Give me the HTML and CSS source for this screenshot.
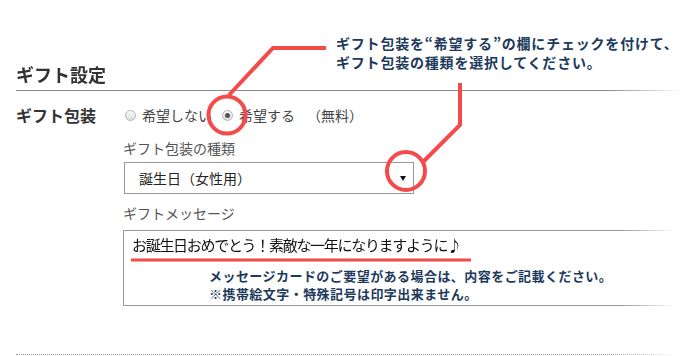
FILE: index.html
```html
<!DOCTYPE html>
<html lang="ja">
<head>
  <meta charset="UTF-8" />
  <meta name="viewport" content="width=device-width, initial-scale=1.0"/>
  <title>ギフト設定</title>
  <link rel="stylesheet" href="styles.css">
</head>
<body>
  <div class="page">
    <h2 class="section-title">ギフト設定</h2>

    <div class="form-row">
      <div class="row-label">ギフト包装</div>
      <div class="radio-group">
        <label class="radio"><input type="radio" name="wrap" /> 希望しない</label>
        <label class="radio"><input type="radio" name="wrap" checked /> 希望する</label>
        <span class="price">（無料）</span>
      </div>
    </div>

    <div class="sub-block">
      <div class="field-label">ギフト包装の種類</div>
      <div class="select-box">
        <span>誕生日（女性用）</span>
        <span class="arrow"></span>
      </div>

      <div class="field-label msg-label">ギフトメッセージ</div>
      <div class="message-box">お誕生日おめでとう！素敵な一年になりますように♪</div>
    </div>

    <div class="dotted-rule"></div>
  </div>

  <!-- 注釈 -->
  <svg class="marks" width="688" height="356" viewBox="0 0 688 356">
    <polyline points="229,95 273,48 326,48" />
    <circle cx="227" cy="115" r="18.5" />
    <polyline points="460,83 460,125 423,162" />
    <circle cx="406" cy="171" r="19" />
    <line class="underline" x1="131" y1="260" x2="471" y2="260" />
  </svg>

  <div class="note note-top">ギフト包装を“希望する”の欄にチェックを付けて、<br>ギフト包装の種類を選択してください。</div>
  <div class="note note-msg">メッセージカードのご要望がある場合は、内容をご記載ください。<br>※携帯絵文字・特殊記号は印字出来ません。</div>
</body>
</html>
```

FILE: styles.css
```css
body {
  margin: 0;
  background: #fff;
  font-family: "Noto Sans CJK JP", "Noto Sans", sans-serif;
  color: #333;
  position: relative;
  width: 688px;
  height: 356px;
  overflow: hidden;
}

.page {
  padding-left: 16px;
}

.section-title {
  margin: 0;
  padding-top: 62px;
  padding-bottom: 4px;
  font-size: 18px;
  line-height: 24px;
  font-weight: bold;
  color: #333;
  border-bottom: 1px solid #8c8c8c;
  -webkit-mask-image: linear-gradient(to right, #000 88%, transparent 99%);
  mask-image: linear-gradient(to right, #000 88%, transparent 99%);
}

.form-row {
  display: flex;
  align-items: center;
  margin-top: 12px;
  height: 24px;
}

.row-label {
  width: 109px;
  font-size: 16px;
  font-weight: bold;
  color: #333;
}

.radio-group {
  display: flex;
  align-items: center;
  font-size: 14px;
  color: #444;
}

.radio {
  display: flex;
  align-items: center;
  margin-right: 10px;
}

.radio input {
  appearance: none;
  -webkit-appearance: none;
  width: 11px;
  height: 11px;
  margin: 0 6px 0 0;
  border: 1px solid #b5b5b5;
  border-radius: 50%;
  background: linear-gradient(#fafafa, #dcdcdc);
  position: relative;
}

.radio input:checked::after {
  content: "";
  position: absolute;
  left: 2px;
  top: 2px;
  width: 5px;
  height: 5px;
  border-radius: 50%;
  background: #555;
}

.price {
  margin-left: 2px;
}

.sub-block {
  margin-left: 107px;
}

.field-label {
  margin-top: 11px;
  font-size: 14px;
  line-height: 20px;
  color: #555;
}

.select-box {
  display: flex;
  justify-content: space-between;
  align-items: center;
  box-sizing: border-box;
  width: 290px;
  height: 32px;
  margin-top: 4px;
  margin-left: 1px;
  padding: 0 7px 0 14px;
  border: 1px solid #999;
  font-size: 14px;
  color: #222;
}

.arrow {
  width: 0;
  height: 0;
  border-left: 3px solid transparent;
  border-right: 3px solid transparent;
  border-top: 5px solid #111;
}

.msg-label {
  margin-top: 9px;
}

.message-box {
  box-sizing: border-box;
  height: 76px;
  margin-top: 7px;
  padding: 3px 0 0 8px;
  border: 1px solid #999;
  border-right: none;
  font-size: 15px;
  line-height: 22px;
  letter-spacing: -1.3px;
  color: #111;
  -webkit-mask-image: linear-gradient(to right, #000 88%, transparent 98%);
  mask-image: linear-gradient(to right, #000 88%, transparent 98%);
}

.dotted-rule {
  margin-top: 48px;
  border-top: 1px dotted #999;
  -webkit-mask-image: linear-gradient(to right, #000 88%, transparent 99%);
  mask-image: linear-gradient(to right, #000 88%, transparent 99%);
}

.marks {
  position: absolute;
  left: 0;
  top: 0;
  pointer-events: none;
}

.marks polyline,
.marks circle,
.marks line {
  fill: none;
  stroke: #f44a4a;
  stroke-width: 4;
}

.marks .underline {
  stroke-width: 3;
}

.note {
  position: absolute;
  font-size: 13px;
  line-height: 18px;
  letter-spacing: 0.45px;
  font-weight: bold;
  color: #1d3a5c;
  white-space: nowrap;
}

.note-top {
  left: 336px;
  top: 34px;
  font-size: 14px;
  line-height: 19px;
  letter-spacing: 0.8px;
}

.note-msg {
  left: 209px;
  top: 267px;
}
```
